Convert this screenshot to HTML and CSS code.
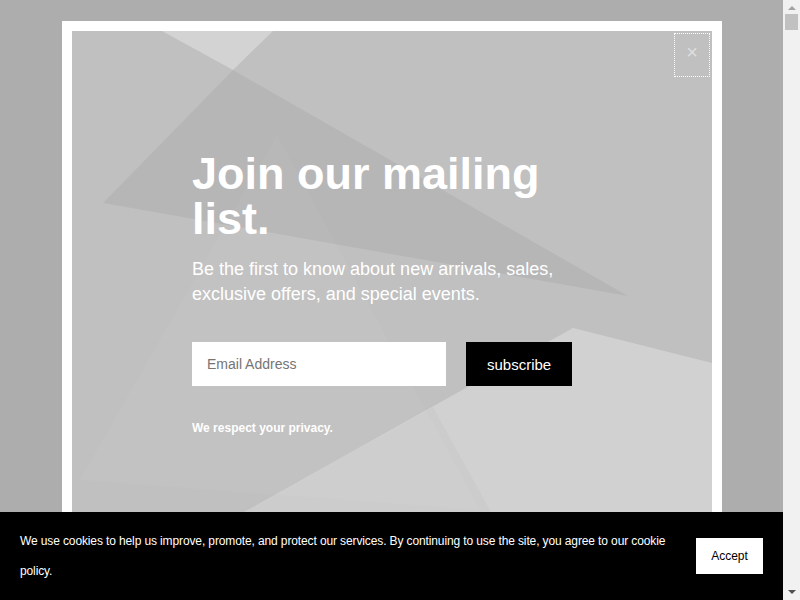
FILE: index.html
```html
<!DOCTYPE html>
<html>
<head>
    <title>Join our mailing list</title>
    <link rel="stylesheet" href="styles.css">
</head>
<body>
    <div class="screen">
        <main class="viewport">
            <div class="modal">
                <div class="panel">
                    <svg class="panel-bg" viewBox="0 0 640 560" preserveAspectRatio="none">
                        <polygon points="90,0 201,0 161,39" fill="#fff" fill-opacity="0.3"/>
                        <polygon points="161,39 31,172 556,265" fill="#000" fill-opacity="0.05"/>
                        <polygon points="205,104 8,449 408,479" fill="#fff" fill-opacity="0.035"/>
                        <polygon points="501,297 640,332 640,560 31,560" fill="#fff" fill-opacity="0.28"/>
                        <polygon points="361,376 463,560 31,560" fill="#000" fill-opacity="0.02"/>
                    </svg>
                    <button class="close" type="button">&times;</button>
                    <div class="content">
                        <h1>Join our mailing list.</h1>
                        <p class="lead">Be the first to know about new arrivals, sales, exclusive offers, and special events.</p>
                        <form class="signup">
                            <input type="email" name="email" placeholder="Email Address">
                            <button type="button">subscribe</button>
                        </form>
                        <p class="privacy">We respect your privacy.</p>
                    </div>
                </div>
            </div>

            <div class="cookie-bar">
                <p>We use cookies to help us improve, promote, and protect our services. By continuing to use the site, you agree to our cookie policy.</p>
                <button type="button">Accept</button>
            </div>
        </main>
        <div class="scrollbar">
            <span class="arrow up"></span>
            <span class="thumb"></span>
            <span class="arrow down"></span>
        </div>
    </div>
</body>
</html>
```

FILE: styles.css
```css
body {
    margin: 0;
    font-family: "Liberation Sans", Arial, sans-serif;
    overflow: hidden;
}
.screen {
    display: flex;
    height: 600px;
}
.viewport {
    flex: 1;
    position: relative;
    overflow: hidden;
    background-color: #adadad;
    padding-top: 21px;
}
.modal {
    width: 640px;
    margin-left: 62px;
    border: 10px solid #fff;
}
.panel {
    position: relative;
    min-height: 560px;
    box-sizing: border-box;
    background-color: #c0c0c0;
    padding: 120px 120px 0;
}
.panel-bg {
    position: absolute;
    top: 0;
    left: 0;
    width: 100%;
    height: 100%;
}
.content {
    position: relative;
    color: #fff;
}
.close {
    position: absolute;
    top: 2px;
    right: 2px;
    z-index: 2;
    width: 36px;
    height: 44px;
    box-sizing: border-box;
    padding: 0 0 5px;
    display: flex;
    align-items: center;
    justify-content: center;
    background: none;
    border: 1px dotted #fff;
    color: #dedede;
    font-family: "Liberation Sans", Arial, sans-serif;
    font-size: 20px;
}
h1 {
    margin: 0;
    font-size: 45px;
    line-height: 45px;
    font-weight: bold;
}
.lead {
    margin: 16px 0 0;
    font-size: 18px;
    line-height: 25px;
}
.signup {
    display: flex;
    gap: 20px;
    margin-top: 35px;
}
.signup input {
    width: 254px;
    height: 44px;
    box-sizing: border-box;
    padding: 0 15px;
    border: none;
    font-family: inherit;
    font-size: 14px;
}
.signup input::placeholder {
    color: #757575;
}
.signup button {
    height: 44px;
    padding: 0 21px;
    border: none;
    background-color: #000;
    color: #fff;
    font-family: inherit;
    font-size: 15px;
}
.privacy {
    margin: 35px 0 0;
    font-size: 12px;
    line-height: 14px;
    font-weight: bold;
}
.cookie-bar {
    position: absolute;
    left: 0;
    right: 0;
    bottom: 0;
    height: 88px;
    box-sizing: border-box;
    padding: 0 20px;
    display: flex;
    align-items: center;
    gap: 20px;
    background-color: #000;
}
.cookie-bar p {
    flex: 1;
    margin: 0;
    color: #fff;
    font-size: 12px;
    line-height: 30px;
    letter-spacing: -0.12px;
}
.cookie-bar button {
    width: 67px;
    height: 36px;
    border: none;
    background-color: #fff;
    color: #000;
    font-family: inherit;
    font-size: 12px;
}
.scrollbar {
    width: 17px;
    background-color: #f1f1f1;
    display: flex;
    flex-direction: column;
    align-items: center;
}
.arrow {
    width: 0;
    height: 0;
    border-left: 4px solid transparent;
    border-right: 4px solid transparent;
}
.arrow.up {
    margin-top: 6px;
    border-bottom: 4px solid #a3a3a3;
}
.arrow.down {
    margin-top: auto;
    margin-bottom: 6px;
    border-top: 4px solid #505050;
}
.thumb {
    width: 13px;
    height: 16px;
    margin-top: 4px;
    background-color: #c1c1c1;
}
```
